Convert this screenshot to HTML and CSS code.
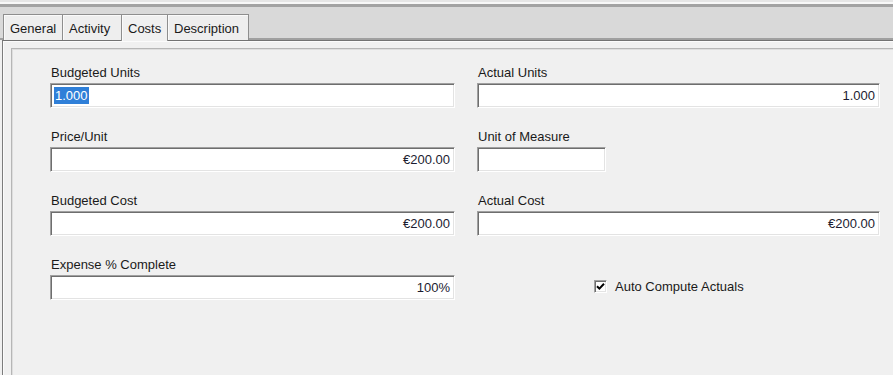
FILE: index.html
```html
<!DOCTYPE html>
<html>
<head>
<meta charset="utf-8">
<link rel="stylesheet" href="styles.css">
</head>
<body>
<div class="app">
  <div class="topbar"></div>
  <div class="tabstrip">
    <div class="tab t-general">General</div>
    <div class="tab t-activity">Activity</div>
    <div class="tab t-costs active">Costs</div>
    <div class="tab t-description">Description</div>
  </div>
  <div class="panel">
    <div class="group">
      <div class="grid">
        <div class="field">
          <div class="label">Budgeted Units</div>
          <div class="input left"><span class="sel">1.000</span></div>
        </div>
        <div class="field">
          <div class="label">Actual Units</div>
          <div class="input">1.000</div>
        </div>
        <div class="field">
          <div class="label">Price/Unit</div>
          <div class="input">€200.00</div>
        </div>
        <div class="field">
          <div class="label">Unit of Measure</div>
          <div class="input short"></div>
        </div>
        <div class="field">
          <div class="label">Budgeted Cost</div>
          <div class="input">€200.00</div>
        </div>
        <div class="field">
          <div class="label">Actual Cost</div>
          <div class="input">€200.00</div>
        </div>
        <div class="field">
          <div class="label">Expense % Complete</div>
          <div class="input">100%</div>
        </div>
        <div class="field">
          <div class="label"></div>
          <div class="checkrow">
            <span class="checkbox"><svg width="9" height="9" viewBox="0 0 9 9"><path d="M1 4.2 L3.4 6.6 L8 1.8" fill="none" stroke="#000" stroke-width="2"/></svg></span>
            <span class="checklabel">Auto Compute Actuals</span>
          </div>
        </div>
      </div>
    </div>
  </div>
</div>
</body>
</html>
```
FILE: styles.css
```css
html, body {
  margin: 0;
  padding: 0;
}
body {
  width: 893px;
  height: 375px;
  overflow: hidden;
  background: #f0f0f0;
  font-family: "Liberation Sans", Arial, sans-serif;
  color: #1a1a1a;
}
.app {
  width: 940px;
}
.topbar {
  height: 2px;
  border-top: 2px solid #e6e6e6;
  background: #f8f8f8;
  border-bottom: 3px solid #a3a3a3;
}
.tabstrip {
  height: 33px;
  box-sizing: border-box;
  background: #d9d9d9;
  box-shadow: inset 0 -2px 0 #a0a0a0;
  display: flex;
  align-items: flex-end;
  padding-left: 3px;
}
.tab {
  height: 26px;
  box-sizing: border-box;
  border: 1px solid #8e8e8e;
  border-bottom: none;
  margin-right: -1px;
  background: #eeeeee;
  font-size: 13px;
  line-height: 27px;
  padding: 0 0 0 6px;
  color: #1a1a1a;
  box-shadow: inset 1px 1px 0 #fafafa;
  white-space: nowrap;
}
.t-general { width: 60px; }
.t-activity { width: 60px; }
.t-costs { width: 47px; }
.t-description { width: 82px; }
.tab.active {
  background: #f0f0f0;
  height: 27px;
  margin-bottom: -1px;
  position: relative;
  z-index: 1;
  line-height: 28px;
}
.panel {
  margin-left: 2px;
  border-top: 1px solid #727272;
  border-left: 1px solid #7c7c7c;
  box-shadow: inset 1px 1px 0 #fbfbfb;
  padding: 7px 0 0 8px;
  background: #f0f0f0;
  height: 340px;
}
.group {
  border: 1px solid #b6b6b6;
  box-shadow: inset 1px 1px 0 #dedede;
  height: 400px;
  padding: 17px 0 0 38px;
}
.grid {
  display: grid;
  grid-template-columns: 405px 403px;
  column-gap: 22px;
  row-gap: 22px;
}
.label {
  height: 14px;
  line-height: 14px;
  font-size: 13px;
  margin: 0 0 3px 1px;
  color: #1a1a1a;
  white-space: nowrap;
}
.input {
  height: 25px;
  box-sizing: border-box;
  background: #fff;
  border: 1px solid;
  border-color: #a0a0a0 #ffffff #ffffff #a0a0a0;
  box-shadow: inset 1px 1px 0 #6e6e6e, inset -1px -1px 0 #e3e3e3;
  font-size: 13px;
  line-height: 23px;
  padding: 0 4px 0 3px;
  text-align: right;
  color: #1c1c30;
}
.input.left {
  text-align: left;
}
.input.short {
  width: 129px;
}
.sel {
  display: inline-block;
  background: #2f7fd8;
  color: #fff;
  line-height: 17px;
  padding: 0 1px;
  vertical-align: middle;
  margin-top: -2px;
}
.checkrow {
  height: 24px;
  display: flex;
  align-items: center;
  padding-left: 117px;
  margin-top: -1px;
}
.checkbox {
  width: 13px;
  height: 13px;
  box-sizing: border-box;
  background: #fff;
  border: 1px solid;
  border-color: #a0a0a0 #ffffff #ffffff #a0a0a0;
  box-shadow: inset 1px 1px 0 #6e6e6e, inset -1px -1px 0 #e3e3e3;
  display: flex;
  align-items: center;
  justify-content: center;
}
.checkbox svg {
  display: block;
}
.checklabel {
  font-size: 13px;
  margin-left: 8px;
  color: #1a1a1a;
}
```
